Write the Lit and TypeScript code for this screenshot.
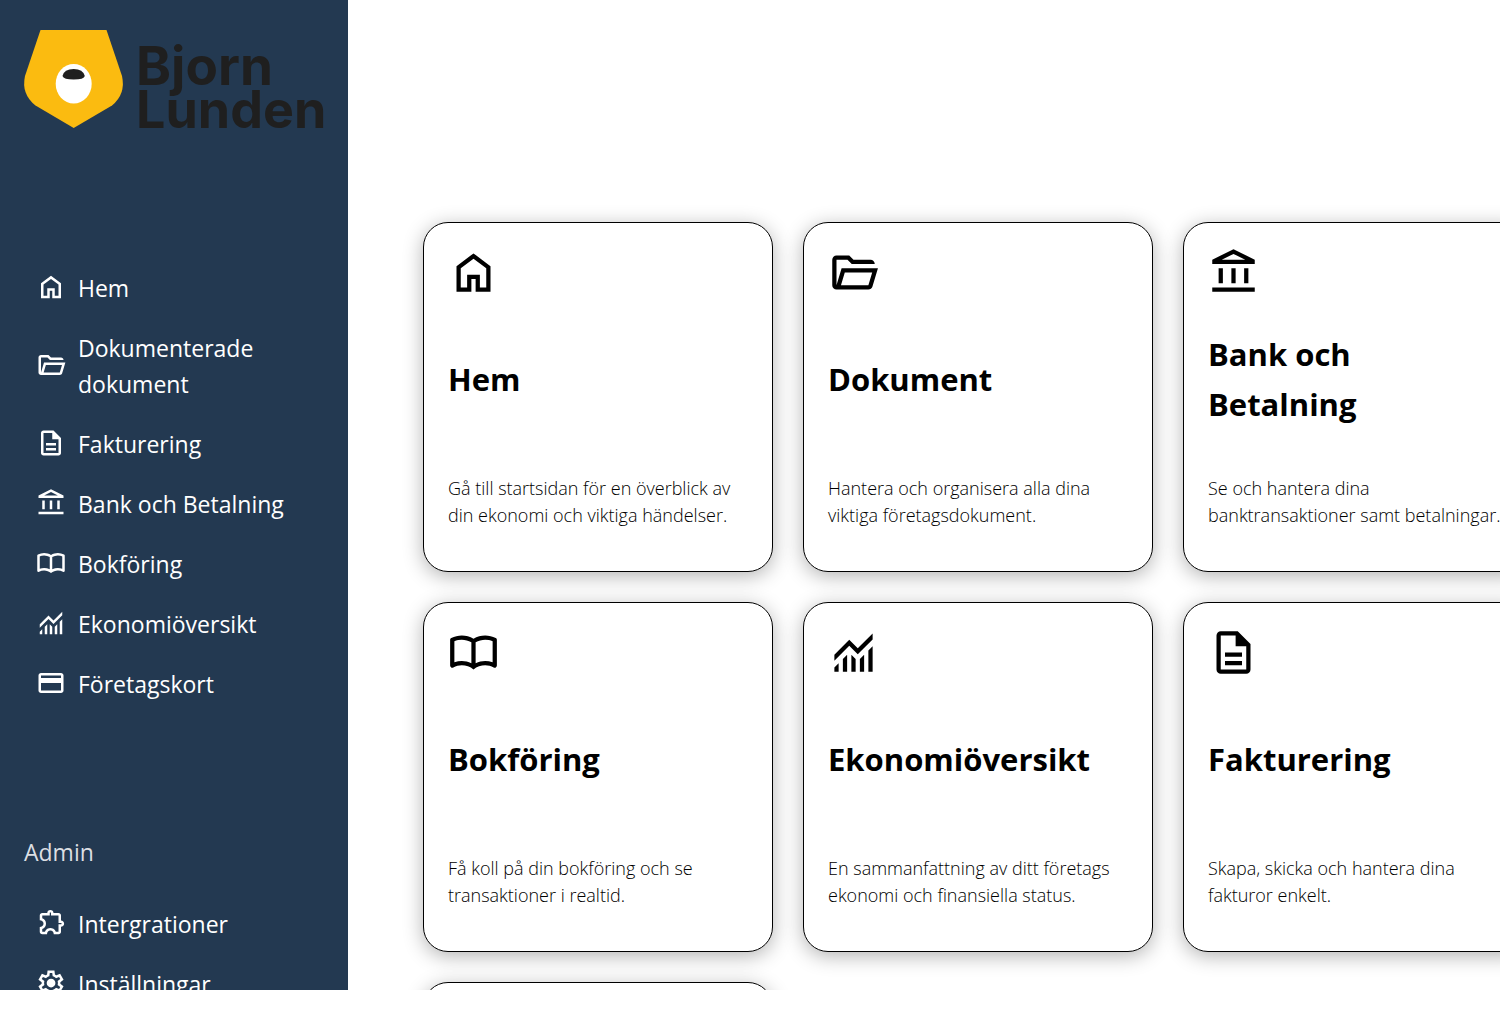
import { LitElement, html, css, svg } from "lit";
import { customElement, property } from "lit/decorators.js";

const ICONS: Record<string, string> = {
  home: "M6 19h3v-6h6v6h3v-9l-6-4.5L6 10v9Zm-2 2V9l8-6 8 6v12h-7v-6h-2v6H4Z",
  folder:
    "M4 20q-.825 0-1.412-.587T2 18V6q0-.825.588-1.412T4 4h6l2 2h8q.825 0 1.413.588T22 8H11.175l-2-2H4v12l2.4-8h17.1l-2.575 8.575q-.2.65-.737 1.038T19 20H4Zm2.1-2H19l1.8-6H7.9l-1.8 6Z",
  document:
    "M8 18h8v-2H8v2Zm0-4h8v-2H8v2Zm-2 8q-.825 0-1.412-.587T4 20V4q0-.825.588-1.412T6 2h8l6 6v12q0 .825-.587 1.413T18 22H6Zm7-13V4H6v16h12V9h-5Z",
  bank: "M5 17v-7h2v7H5Zm6 0v-7h2v7h-2Zm-9 4v-2h20v2H2Zm15-4v-7h2v7h-2ZM2 8V6l10-5 10 5v2H2Zm4.475-2h11.05L12 3.25 6.475 6Z",
  book: "M6.5 16q1.175 0 2.288.263T11 17.05V7.2q-1.025-.6-2.175-.9T6.5 6q-.9 0-1.788.175T3 6.7v9.9q.875-.3 1.738-.45T6.5 16Zm6.5 1.05q1.1-.525 2.213-.787T17.5 16q.9 0 1.763.15T21 16.6V6.7q-.825-.35-1.713-.525T17.5 6q-1.175 0-2.325.3T13 7.2v9.85ZM12 20q-1.2-.95-2.6-1.475T6.5 18q-1.05 0-2.062.275T2.5 19.05q-.525.275-1.012-.025T1 18.15V6.1q0-.275.138-.525T1.55 5.2q1.15-.6 2.4-.9T6.5 4q1.45 0 2.838.375T12 5.5q1.275-.75 2.663-1.125T17.5 4q1.3 0 2.55.3t2.4.9q.275.125.413.375T23 6.1v12.05q0 .575-.488.875t-1.012.025q-.925-.5-1.937-.775T17.5 18q-1.5 0-2.9.525T12 20Z",
  chart:
    "M3 21v-2l2-2v4H3Zm4 0v-6l2-2v8H7Zm4 0v-8l2 2.025V21h-2Zm4 0v-5.975l2-2V21h-2Zm4 0V11l2-2v12h-2ZM3 15.825V13l7-7 4 4 7-7v2.825l-7 7-4-4-7 7Z",
  card: "M22 6v12q0 .825-.587 1.413T20 20H4q-.825 0-1.412-.587T2 18V6q0-.825.588-1.412T4 4h16q.825 0 1.413.588T22 6ZM4 8h16V6H4v2Zm0 4v6h16v-6H4Z",
  puzzle:
    "M8.8 21H5q-.825 0-1.412-.587T3 19v-3.8q1.2 0 2.1-.762T6 12.5q0-1.175-.9-1.937T3 9.8V6q0-.825.588-1.412T5 4h4q0-1.05.725-1.775T11.5 1.5t1.775.725T14 4h4q.825 0 1.413.588T20 6v4q1.05 0 1.775.725T22.5 12.5t-.725 1.775T20 15v4q0 .825-.587 1.413T18 21h-3.8q0-1.25-.787-2.125T11.5 18t-1.912.875T8.8 21ZM5 19h2.125q.6-1.65 1.925-2.325T11.5 16t2.45.675T15.875 19H18v-6h2q.2 0 .35-.15t.15-.35t-.15-.35T20 12h-2V6h-6V4q0-.2-.15-.35t-.35-.15t-.35.15T11 4v2H5v2.2q1.35.5 2.175 1.675T8 12.5q0 1.425-.825 2.6T5 16.8V19Z",
  gear: "m9.25 22-.4-3.2q-.325-.125-.612-.3t-.563-.375L4.7 19.375l-2.75-4.75 2.575-1.95Q4.5 12.5 4.5 12.338v-.675q0-.163.025-.338L1.95 9.375l2.75-4.75 2.975 1.25q.275-.2.575-.375t.6-.3l.4-3.2h5.5l.4 3.2q.325.125.613.3t.562.375l2.975-1.25 2.75 4.75-2.575 1.95q.025.175.025.338v.674q0 .163-.05.338l2.575 1.95-2.75 4.75-2.95-1.25q-.275.2-.575.375t-.6.3l-.4 3.2h-5.5ZM11 20h1.975l.35-2.65q.775-.2 1.438-.588t1.212-.937l2.475 1.025.975-1.7-2.15-1.625q.125-.35.175-.738T17.5 12t-.05-.788-.175-.737l2.15-1.625-.975-1.7-2.475 1.05q-.55-.575-1.212-.962t-1.438-.588L13 4h-1.975l-.35 2.65q-.775.2-1.437.588t-1.213.937L5.55 7.15l-.975 1.7 2.15 1.6q-.125.375-.175.75t-.05.8q0 .4.05.775t.175.75l-2.15 1.625.975 1.7 2.475-1.05q.55.575 1.213.963t1.437.587L11 20Zm1.05-4.5q1.45 0 2.475-1.025T15.55 12t-1.025-2.475T12.05 8.5q-1.475 0-2.488 1.025T8.55 12t1.013 2.475T12.05 15.5Z",
};

interface Entry {
  icon: string;
  label: string;
}

interface Tile extends Entry {
  text: string;
}

const MENU: Entry[] = [
  { icon: "home", label: "Hem" },
  { icon: "folder", label: "Dokumenterade dokument" },
  { icon: "document", label: "Fakturering" },
  { icon: "bank", label: "Bank och Betalning" },
  { icon: "book", label: "Bokföring" },
  { icon: "chart", label: "Ekonomiöversikt" },
  { icon: "card", label: "Företagskort" },
];

const ADMIN: Entry[] = [
  { icon: "puzzle", label: "Intergrationer" },
  { icon: "gear", label: "Inställningar" },
];

const TILES: Tile[] = [
  { icon: "home", label: "Hem", text: "Gå till startsidan för en överblick av din ekonomi och viktiga händelser." },
  { icon: "folder", label: "Dokument", text: "Hantera och organisera alla dina viktiga företagsdokument." },
  { icon: "bank", label: "Bank och Betalning", text: "Se och hantera dina banktransaktioner samt betalningar." },
  { icon: "book", label: "Bokföring", text: "Få koll på din bokföring och se transaktioner i realtid." },
  { icon: "chart", label: "Ekonomiöversikt", text: "En sammanfattning av ditt företags ekonomi och finansiella status." },
  { icon: "document", label: "Fakturering", text: "Skapa, skicka och hantera dina fakturor enkelt." },
  { icon: "card", label: "Företagskort", text: "" },
];

@customElement("app-icon")
export class AppIcon extends LitElement {
  @property() name = "home";

  static styles = css`
    :host {
      display: block;
      flex: none;
    }
    .glyph {
      display: block;
      width: 100%;
      height: 100%;
      fill: currentColor;
    }
  `;

  render() {
    return html`<svg class="glyph" viewBox="0 0 24 24" aria-hidden="true">
      ${svg`<path d=${ICONS[this.name]}></path>`}
    </svg>`;
  }
}

@customElement("app-logo")
export class AppLogo extends LitElement {
  static styles = css`
    :host {
      display: block;
    }
    .logo {
      display: block;
      width: 100%;
      overflow: visible;
    }
    .word {
      font-family: Inter, "Liberation Sans", sans-serif;
      font-size: 53px;
      font-weight: 700;
      fill: #1f1f1f;
    }
    .word-last {
      font-size: 52px;
    }
  `;

  render() {
    return html`<svg class="logo" viewBox="0 0 300 100" role="img" aria-label="Bjorn Lunden">
      <path
        fill="#fbbb10"
        d="M16.5 0H82.5L98 46Q102 64 88 75.5L49.7 98L11.5 75.5Q-3 64 1 46Z"
      ></path>
      <ellipse cx="49.7" cy="53.7" rx="18" ry="19.7" fill="#fff"></ellipse>
      <path fill="#1f1f1f" d="M38.5 46Q40 39 49.7 39Q59 39 60.8 46Q60 49.5 49.7 49.5Q39.5 49.5 38.5 46Z"></path>
      <text class="word" x="112" y="55">Bjorn</text>
      <text class="word word-last" x="112" y="98">Lunden</text>
    </svg>`;
  }
}

@customElement("app-root")
export class AppRoot extends LitElement {
  static styles = css`
    :host {
      display: block;
      font-family: "Open Sans", "Noto Sans", sans-serif;
      color: #000;
      background: #fff;
    }
    .shell {
      display: grid;
      grid-template-columns: 348px minmax(0, 1fr);
      height: calc(100vh - 22px);
      overflow: hidden;
    }
    .side {
      box-sizing: border-box;
      min-height: 0;
      overflow: hidden;
      padding: 30px 24px 0;
      background: #233951;
      color: #fff;
      font-size: 23px;
      line-height: 36px;
    }
    .list {
      display: flex;
      flex-direction: column;
      gap: 24px;
      margin: 0;
      padding: 0 12px;
      list-style: none;
    }
    .menu {
      margin-top: 140px;
    }
    .heading {
      margin: 132px 0 36px;
      font-size: inherit;
      font-weight: 400;
      color: #dcdfe3;
    }
    .link {
      display: flex;
      align-items: center;
      gap: 12px;
      color: inherit;
      text-decoration: none;
    }
    .link-icon {
      width: 30px;
      height: 30px;
      margin-bottom: 2px;
    }
    .main {
      min-width: 0;
      min-height: 0;
      overflow: hidden;
    }
    .tiles {
      display: grid;
      grid-template-columns: repeat(3, 350px);
      grid-auto-rows: 350px;
      gap: 30px;
      padding: 222px 0 0 75px;
    }
    .tile {
      box-sizing: border-box;
      display: grid;
      grid-template-rows: 51px 1fr auto;
      padding: 24px;
      border: 1px solid #000;
      border-radius: 25px;
      background: #fff;
      box-shadow: 0 4px 20px rgba(0, 0, 0, 0.3);
      color: inherit;
      text-decoration: none;
    }
    .tile-icon {
      width: 51px;
      height: 51px;
    }
    .tile-title {
      align-self: center;
      margin: 2px 0 0;
      padding-right: 24px;
      font-size: 31px;
      font-weight: 700;
      line-height: 50px;
    }
    .tile-text {
      min-height: 54px;
      margin: 18px 0;
      font-size: 18px;
      font-weight: 300;
      line-height: 27px;
    }
  `;

  private renderLink(item: Entry) {
    return html`<li>
      <a class="link" href="#"><app-icon class="link-icon" name=${item.icon}></app-icon><span>${item.label}</span></a>
    </li>`;
  }

  render() {
    return html`<div class="shell">
      <aside class="side">
        <app-logo></app-logo>
        <nav>
          <ul class="list menu">
            ${MENU.map((item) => this.renderLink(item))}
          </ul>
          <h2 class="heading">Admin</h2>
          <ul class="list">
            ${ADMIN.map((item) => this.renderLink(item))}
          </ul>
        </nav>
      </aside>
      <main class="main">
        <div class="tiles">
          ${TILES.map(
            (tile) => html`<a class="tile" href="#">
              <app-icon class="tile-icon" name=${tile.icon}></app-icon>
              <h3 class="tile-title">${tile.label}</h3>
              <p class="tile-text">${tile.text}</p>
            </a>`
          )}
        </div>
      </main>
    </div>`;
  }
}
